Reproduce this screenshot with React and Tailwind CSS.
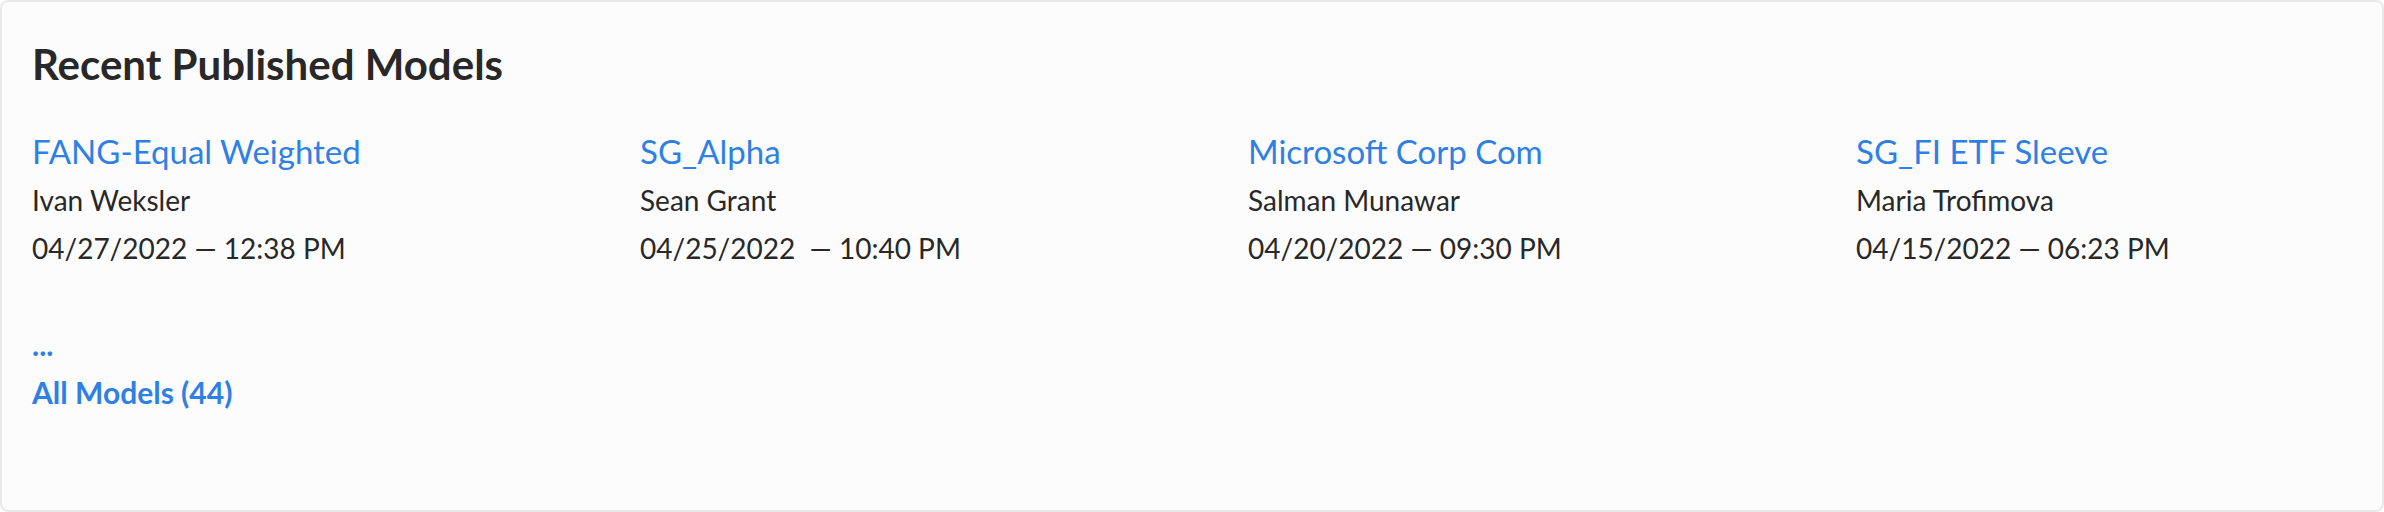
const models = [
  { name: 'FANG-Equal Weighted', author: 'Ivan Weksler', published: '04/27/2022 — 12:38 PM' },
  { name: 'SG_Alpha', author: 'Sean Grant', published: '04/25/2022  — 10:40 PM' },
  { name: 'Microsoft Corp Com', author: 'Salman Munawar', published: '04/20/2022 — 09:30 PM' },
  { name: 'SG_FI ETF Sleeve', author: 'Maria Trofimova', published: '04/15/2022 — 06:23 PM' },
];

function ModelCard({ model }) {
  return (
    <li>
      <h2 className="mb-0.5 text-[33px] leading-[46px]">
        <a href="#model" className="text-[#2f80e4]">{model.name}</a>
      </h2>
      <p>{model.author}</p>
      <p className="whitespace-pre">{model.published}</p>
    </li>
  );
}

export default function App() {
  return (
    <section className="min-h-screen rounded-lg border-2 border-[#eaeaea] bg-[#fcfcfc] px-[30px] pt-8 pb-20 font-['Lato',sans-serif] text-[28px] leading-[48px] text-[#282828]">
      <h1 className="text-[42px] leading-[60px] font-bold">Recent Published Models</h1>
      <ul className="mt-[34px] grid grid-cols-4 gap-28">
        {models.map((model) => (
          <ModelCard key={model.name} model={model} />
        ))}
      </ul>
      <nav aria-label="More models" className="mt-12 flex flex-col items-start text-[30px] font-bold text-[#2f80e4]">
        <a href="#more" className="leading-[48px]">...</a>
        <a href="#all" className="leading-[48px]">All Models (44)</a>
      </nav>
    </section>
  );
}
